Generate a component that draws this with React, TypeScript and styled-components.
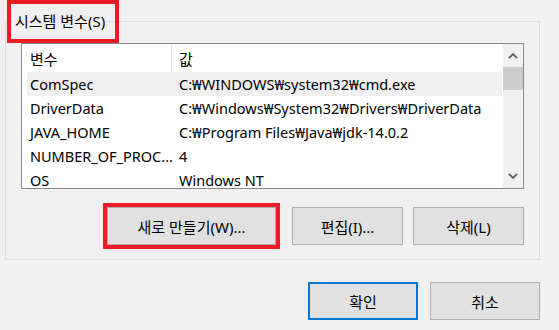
import styled, { createGlobalStyle } from 'styled-components';

const GlobalStyle = createGlobalStyle`
  html, body {
    margin: 0;
    padding: 0;
    background: #f0f0f0;
  }
  body {
    font-family: "Noto Sans", "Noto Sans CJK KR", sans-serif;
    font-size: 14.5px;
    color: #000;
  }
`;

const Page = styled.div`
  width: 559px;
  height: 330px;
  box-sizing: border-box;
  padding: 9px 19px 0 5px;
  display: flex;
  flex-direction: column;
`;

const GroupBox = styled.fieldset`
  margin: 0;
  padding: 0 15px 14px 15px;
  border: 1px solid #dcdcdc;
  display: flex;
  flex-direction: column;
`;

const GroupTitle = styled.legend`
  position: relative;
  margin-left: -8px;
  padding: 0 2px;
  height: 24px;
  line-height: 24px;
  font-size: 15px;

  &::after {
    content: '';
    position: absolute;
    left: -6px;
    right: -12px;
    top: -9px;
    bottom: -10px;
    border: 4px solid #ed1c24;
  }
`;

const ListBox = styled.div`
  margin-top: 10px;
  height: 146px;
  box-sizing: border-box;
  border: 1px solid #828790;
  background: #fff;
  display: flex;
  overflow: hidden;
`;

const Table = styled.div`
  flex: 1;
  padding: 0 1px 0 5px;
  min-width: 0;
`;

const HeaderRow = styled.div`
  display: grid;
  grid-template-columns: 145px 1fr;
  height: 28px;
  align-items: center;
`;

const HeaderCell = styled.div<{ $divider?: boolean }>`
  height: 100%;
  display: flex;
  align-items: center;
  font-size: 15px;
  padding-left: ${(p) => (p.$divider ? '7px' : '3px')};
  border-left: ${(p) => (p.$divider ? '1px solid #e5e5e5' : 'none')};
  margin-left: ${(p) => (p.$divider ? '-1px' : '0')};
`;

const Row = styled.div<{ $selected?: boolean }>`
  display: grid;
  grid-template-columns: 145px 1fr;
  height: 24px;
  align-items: center;
  background: ${(p) => (p.$selected ? '#f0f0f0' : 'transparent')};
`;

const NameCell = styled.div`
  padding-left: 3px;
  white-space: nowrap;
`;

const ValueCell = styled.div`
  padding-left: 7px;
  white-space: nowrap;
  overflow: hidden;
`;

const ScrollBar = styled.div`
  width: 20px;
  background: #f0f0f0;
  display: flex;
  flex-direction: column;
`;

const ScrollButton = styled.div`
  height: 23px;
  display: flex;
  align-items: center;
  justify-content: center;
`;

const Thumb = styled.div`
  height: 23px;
  background: #cdcdcd;
`;

const Spacer = styled.div`
  flex: 1;
`;

const ButtonRow = styled.div<{ $gap: number }>`
  display: flex;
  justify-content: flex-end;
  gap: ${(p) => p.$gap}px;
`;

const Button = styled.button<{ $width: number; $highlight?: boolean; $default?: boolean }>`
  width: ${(p) => p.$width}px;
  height: 38px;
  box-sizing: border-box;
  background: #e1e1e1;
  border: ${(p) => (p.$default ? '2px solid #0078d7' : '1px solid #adadad')};
  font-family: "Noto Sans", "Noto Sans CJK KR", sans-serif;
  font-size: 15px;
  color: #000;
  padding: 0;
  outline: ${(p) => (p.$highlight ? '4px solid #ed1c24' : 'none')};
  margin-right: ${(p) => (p.$highlight ? '6px' : '0')};
`;

const ActionRow = styled(ButtonRow)`
  margin-top: 18px;
`;

const DialogRow = styled(ButtonRow)`
  margin-top: 22px;
`;

const Chevron = ({ up }: { up?: boolean }) => (
  <svg width="10" height="7" viewBox="0 0 10 7">
    <path
      d={up ? 'M1 6 L5 2 L9 6' : 'M1 1 L5 5 L9 1'}
      fill="none"
      stroke="#606060"
      strokeWidth="1.8"
    />
  </svg>
);

const variables = [
  { name: 'ComSpec', value: 'C:₩WINDOWS₩system32₩cmd.exe' },
  { name: 'DriverData', value: 'C:₩Windows₩System32₩Drivers₩DriverData' },
  { name: 'JAVA_HOME', value: 'C:₩Program Files₩Java₩jdk-14.0.2' },
  { name: 'NUMBER_OF_PROC...', value: '4' },
  { name: 'OS', value: 'Windows NT' },
];

export default function App() {
  return (
    <>
      <GlobalStyle />
      <Page>
        <GroupBox>
          <GroupTitle>시스템 변수(S)</GroupTitle>
          <ListBox>
            <Table>
              <HeaderRow>
                <HeaderCell>변수</HeaderCell>
                <HeaderCell $divider>값</HeaderCell>
              </HeaderRow>
              {variables.map((v, i) => (
                <Row key={v.name} $selected={i === 0}>
                  <NameCell>{v.name}</NameCell>
                  <ValueCell>{v.value}</ValueCell>
                </Row>
              ))}
            </Table>
            <ScrollBar>
              <ScrollButton>
                <Chevron up />
              </ScrollButton>
              <Thumb />
              <Spacer />
              <ScrollButton>
                <Chevron />
              </ScrollButton>
            </ScrollBar>
          </ListBox>
          <ActionRow $gap={10}>
            <Button $width={169} $highlight>새로 만들기(W)...</Button>
            <Button $width={111}>편집(I)...</Button>
            <Button $width={111}>삭제(L)</Button>
          </ActionRow>
        </GroupBox>
        <DialogRow $gap={12}>
          <Button $width={110} $default>확인</Button>
          <Button $width={110}>취소</Button>
        </DialogRow>
      </Page>
    </>
  );
}
